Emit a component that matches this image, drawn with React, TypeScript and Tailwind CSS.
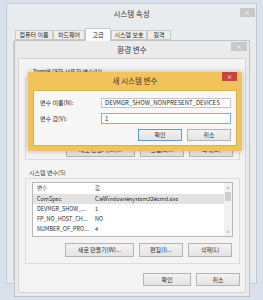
import React from "react";

function Btn({ w, h, label, def }: { w: string; h: string; label: string; def?: boolean }) {
  return (
    <div
      className={`${w} ${h} flex items-center justify-center text-[6px] bg-gradient-to-b from-[#f2f2f2] to-[#e4e4e4] border ${
        def ? "border-[#5b9bd5]" : "border-[#b4b4b4]"
      }`}
    >
      {label}
    </div>
  );
}

function Tab({ label, w, active }: { label: string; w: string; active?: boolean }) {
  return (
    <div
      className={`${w} flex items-center justify-center text-[6px] border border-[#c9c9c9] ${
        active ? "h-[13px] bg-[#fcfcfc] border-b-0 relative z-10" : "h-[10px] bg-[#eeeeee] mb-[1px]"
      }`}
    >
      {label}
    </div>
  );
}

export default function App() {
  const rows = [
    { n: "ComSpec", v: "C:₩Windows₩system32₩cmd.exe", sel: true },
    { n: "DEVMGR_SHOW_...", v: "1" },
    { n: "FP_NO_HOST_CH...", v: "NO" },
    { n: "NUMBER_OF_PRO...", v: "4" },
  ];
  return (
    <div className="relative w-[263px] h-[300px] overflow-hidden bg-[#d8e1ec] font-['Noto_Sans_CJK_KR',sans-serif] text-[#2b2b2b] leading-none">
      {/* Outer window: 시스템 속성 */}
      <div className="absolute left-[6px] top-[3px] w-[251px] h-[281px] bg-[#e9ecef] border border-[#c4ccd7] flex flex-col">
        <div className="relative h-[19px] flex items-center justify-center text-[7.5px] text-[#333]">
          시스템 속성
          <div className="absolute right-[1px] top-[4px] w-[15px] h-[9px] bg-[#c8c8c8] flex items-center justify-center text-white text-[6px]">
            ×
          </div>
        </div>
        <div className="flex items-end pl-[8px] mt-[4px] h-[14px]">
          <Tab label="컴퓨터 이름" w="w-[38px]" />
          <Tab label="하드웨어" w="w-[32px]" />
          <Tab label="고급" w="w-[26px]" active />
          <Tab label="시스템 보호" w="w-[36px]" />
          <Tab label="원격" w="w-[24px]" />
        </div>
        <div className="flex-1 mx-[6px] mb-[3px] bg-[#f6f6f6] border border-[#cfcfcf]" />
      </div>

      {/* Inner window: 환경 변수 */}
      <div className="absolute left-[14px] top-[40px] w-[236px] h-[257px] bg-[#ebebeb] border border-[#c2c2c2] flex flex-col">
        <div className="relative h-[17px] flex items-center justify-center text-[7.5px] text-[#333]">
          환경 변수
          <div className="absolute right-[2px] top-[1px] w-[16px] h-[9px] bg-[#c8c8c8] flex items-center justify-center text-white text-[6px]">
            ×
          </div>
        </div>
        <div className="flex-1 mx-[3px] mb-[3px] bg-[#f4f4f4] border border-[#d4d4d4] flex flex-col">
          {/* user variables group (mostly hidden) */}
          <div className="mt-[10px] ml-[14px] h-[7px] text-[6px] whitespace-nowrap">Tom에 대한 사용자 변수(U)</div>
          <div className="mt-[2px] ml-[6px] mr-[5px] h-[82px] border border-[#dcdcdc] flex flex-col justify-end items-end pb-[2px] pr-[6px]">
            <div className="flex gap-[5px]">
              <Btn w="w-[69px]" h="h-[14px]" label="새로 만들기(W)..." />
              <Btn w="w-[44px]" h="h-[14px]" label="편집(E)..." />
              <Btn w="w-[44px]" h="h-[14px]" label="삭제(D)" />
            </div>
          </div>
          {/* system variables */}
          <div className="mt-[10px] ml-[10px] h-[7px] text-[6px] text-[#444]">시스템 변수(S)</div>
          <div className="mt-[1px] ml-[6px] mr-[5px] h-[86px] border border-[#dcdcdc] flex flex-col px-[6px] pt-[3px]">
            <div className="h-[55px] bg-white border border-[#b8b8b8] flex">
              <div className="flex-1 flex flex-col min-w-0">
                <div className="h-[11px] flex items-center text-[5.5px] text-[#444]">
                  <span className="w-[62px] shrink-0 pl-[4px]">변수</span>
                  <span>값</span>
                </div>
                {rows.map((r) => (
                  <div
                    key={r.n}
                    className={`h-[10px] flex items-center text-[5.5px] leading-[10px] whitespace-nowrap ${r.sel ? "bg-[#e2e2e2]" : ""}`}
                  >
                    <span className="w-[62px] shrink-0 pl-[4px]">{r.n}</span>
                    <span>{r.v}</span>
                  </div>
                ))}
              </div>
              <div className="w-[8px] bg-[#f2f2f2] flex flex-col items-center">
                <div className="h-[9px] flex items-center text-[5px] text-[#777]">˄</div>
                <div className="w-[6px] h-[9px] bg-[#cdcdcd]" />
                <div className="flex-1" />
                <div className="h-[9px] flex items-center text-[5px] text-[#777]">˅</div>
              </div>
            </div>
            <div className="mt-[6px] flex justify-end gap-[5px] pr-[1px]">
              <Btn w="w-[69px]" h="h-[14px]" label="새로 만들기(W)..." />
              <Btn w="w-[44px]" h="h-[14px]" label="편집(I)..." />
              <Btn w="w-[44px]" h="h-[14px]" label="삭제(L)" />
            </div>
          </div>
          <div className="mt-[9px] mr-[5px] flex justify-end gap-[5px]">
            <Btn w="w-[48px]" h="h-[13px]" label="확인" />
            <Btn w="w-[44px]" h="h-[13px]" label="취소" />
          </div>
        </div>
      </div>

      {/* New system variable dialog */}
      <div className="absolute left-[28px] top-[72px] w-[214px] h-[79px] bg-[#f1c35a] flex flex-col shadow-[0_0_6px_rgba(0,0,0,0.25)]">
        <div className="relative h-[18px] flex items-center justify-center text-[7.5px] text-[#333]">
          새 시스템 변수
          <div className="absolute right-[5px] top-0 w-[15px] h-[9px] bg-[#c9433b] flex items-center justify-center text-white text-[6px]">
            ×
          </div>
        </div>
        <div className="flex-1 mx-[5px] mb-[5px] bg-[#f7f7f7] border border-[#d9b04f] flex flex-col px-[5px] pt-[7px]">
          <div className="flex items-center h-[10px]">
            <span className="w-[62px] pl-[1px] text-[6px]">변수 이름(N):</span>
            <div className="flex-1 h-[10px] bg-white border border-[#c4c4c4] flex items-center pl-[3px] text-[6px]">
              DEVMGR_SHOW_NONPRESENT_DEVICES
            </div>
          </div>
          <div className="flex items-center h-[11px] mt-[5px]">
            <span className="w-[62px] pl-[1px] text-[6px]">변수 값(V):</span>
            <div className="flex-1 h-[11px] bg-white border border-[#7fb0dc] flex items-center pl-[3px] text-[6px]">
              1
            </div>
          </div>
          <div className="mt-[5px] flex justify-end gap-[5px]">
            <Btn w="w-[44px]" h="h-[12px]" label="확인" def />
            <Btn w="w-[44px]" h="h-[12px]" label="취소" />
          </div>
        </div>
      </div>
    </div>
  );
}
